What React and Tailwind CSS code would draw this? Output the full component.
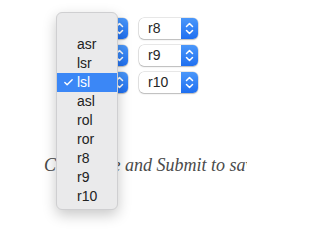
import { Check } from 'lucide-react';

const leftValues = ['lsl', 'lsl', 'lsl'];
const rightValues = ['r8', 'r9', 'r10'];
const options = ['', 'asr', 'lsr', 'lsl', 'asl', 'rol', 'ror', 'r8', 'r9', 'r10'];

function Stepper() {
  return (
    <div className="w-[17px] h-full rounded-r-[5px] bg-gradient-to-b from-[#4a97fa] to-[#1f6ff0] flex items-center justify-center">
      <svg width="9" height="13" viewBox="0 0 9 13" fill="none" stroke="white" strokeWidth="1.5" strokeLinecap="round" strokeLinejoin="round">
        <path d="M1.5 4.5 L4.5 1.5 L7.5 4.5" />
        <path d="M1.5 8.5 L4.5 11.5 L7.5 8.5" />
      </svg>
    </div>
  );
}

function Select({ value }) {
  return (
    <div className="w-[59px] h-[21px] flex rounded-[5px] bg-white shadow-[0_0_0_0.5px_rgba(0,0,0,0.18),0_1px_1.5px_rgba(0,0,0,0.2)]">
      <div className="flex-1 pl-[9px] flex items-center text-[14px] text-[#262626]">{value}</div>
      <Stepper />
    </div>
  );
}

export default function App() {
  return (
    <div className="relative w-[247px] h-[237px] bg-white overflow-hidden font-['Liberation_Sans',Arial,sans-serif]">
      <div className="pt-[18px] pl-[69px] grid grid-cols-[59px_59px] gap-x-[11px] gap-y-[6px] w-max">
        {rightValues.map((r, i) => (
          <div key={r} className="contents">
            <Select value={leftValues[i]} />
            <Select value={r} />
          </div>
        ))}
      </div>

      <p className="mt-[61px] ml-[44px] whitespace-nowrap italic text-[18px] leading-[22px] text-[#4a4a4a] font-['Liberation_Serif',Georgia,serif]">
        Click Save and Submit to save your changes.
      </p>

      <div className="absolute left-[56px] top-[12px] w-[62px] h-[198px] rounded-[6px] bg-[#eaeaeb] border border-[#cfcfd1] shadow-[0_5px_14px_rgba(0,0,0,0.22)] py-[3px]">
        {options.map((o, i) => (
          <div
            key={i}
            className={
              o === 'lsl'
                ? 'h-[19px] flex items-center bg-[#3b87f6] text-white text-[14px]'
                : 'h-[19px] flex items-center text-[#222] text-[14px]'
            }
          >
            <span className="w-[20px] flex justify-center">
              {o === 'lsl' && <Check size={11} strokeWidth={3} className="ml-[3px]" />}
            </span>
            <span>{o}</span>
          </div>
        ))}
      </div>
    </div>
  );
}
